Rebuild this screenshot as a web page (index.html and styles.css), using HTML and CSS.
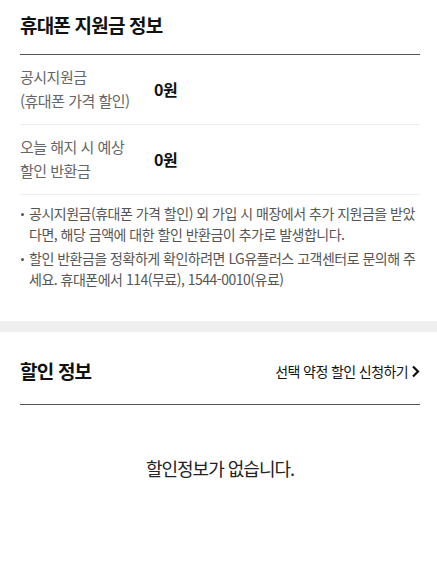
FILE: index.html
```html
<!DOCTYPE html>
<html lang="ko">
<head>
    <meta charset="UTF-8">
    <meta name="viewport" content="width=device-width, initial-scale=1.0">
    <title>휴대폰 지원금 정보</title>
    <link rel="stylesheet" href="styles.css">
</head>
<body>
    <section class="section">
        <div class="section-head">
            <h2 class="section-title">휴대폰 지원금 정보</h2>
        </div>

        <div class="info-row">
            <div class="info-label">공시지원금<br>(휴대폰 가격 할인)</div>
            <div class="info-value">0원</div>
        </div>
        <div class="info-row">
            <div class="info-label">오늘 해지 시 예상<br>할인 반환금</div>
            <div class="info-value">0원</div>
        </div>

        <ul class="notes">
            <li>공시지원금(휴대폰 가격 할인) 외 가입 시 매장에서 추가 지원금을 받았다면, 해당 금액에 대한 할인 반환금이 추가로 발생합니다.</li>
            <li>할인 반환금을 정확하게 확인하려면 LG유플러스 고객센터로 문의해 주세요. 휴대폰에서 114(무료), 1544-0010(유료)</li>
        </ul>
    </section>

    <div class="band"></div>

    <section class="section">
        <div class="section-head head-split">
            <h2 class="section-title">할인 정보</h2>
            <a class="more-link" href="#">선택 약정 할인 신청하기
                <svg width="9" height="13" viewBox="0 0 9 13"><polyline points="2,1.5 7,6.5 2,11.5" fill="none" stroke="#111" stroke-width="2.2"/></svg>
            </a>
        </div>
        <p class="empty">할인정보가 없습니다.</p>
    </section>
</body>
</html>
```

FILE: styles.css
```css
body {
    margin: 0;
    font-family: "Noto Sans CJK KR", "Noto Sans", sans-serif;
    color: #111;
    background: #fff;
}
.section {
    padding: 0 17px 0 20px;
}
.section-head {
    border-bottom: 1px solid #555;
    padding: 10px 0 14px;
}
.head-split {
    display: flex;
    justify-content: space-between;
    align-items: center;
    padding: 24px 0 18px;
}
.section-title {
    margin: 0;
    font-size: 19px;
    font-weight: 700;
    line-height: 30px;
    letter-spacing: -0.8px;
}
.info-row {
    display: flex;
    align-items: center;
    padding: 10px 0 11px;
    border-bottom: 1px solid #eee;
}
.info-label {
    width: 134px;
    font-size: 15px;
    line-height: 24px;
    color: #666;
    letter-spacing: -0.5px;
}
.info-value {
    font-size: 16px;
    font-weight: 700;
    letter-spacing: -0.5px;
}
.notes {
    list-style: none;
    margin: 0;
    padding: 8px 0 28px;
}
.notes li {
    position: relative;
    padding-left: 9px;
    margin-bottom: 3px;
    font-size: 14px;
    line-height: 21px;
    color: #555;
    letter-spacing: -0.5px;
    word-break: break-all;
}
.notes li::before {
    content: "";
    position: absolute;
    left: 1px;
    top: 10px;
    width: 3px;
    height: 3px;
    border-radius: 50%;
    background: #555;
}
.band {
    height: 11px;
    background: #efefef;
}
.more-link {
    display: flex;
    align-items: center;
    gap: 3px;
    font-size: 14px;
    color: #111;
    text-decoration: none;
    letter-spacing: -0.6px;
}
.empty {
    margin: 0;
    padding: 48px 0;
    text-align: center;
    font-size: 18px;
    line-height: 30px;
    color: #222;
    letter-spacing: -1px;
}
```
